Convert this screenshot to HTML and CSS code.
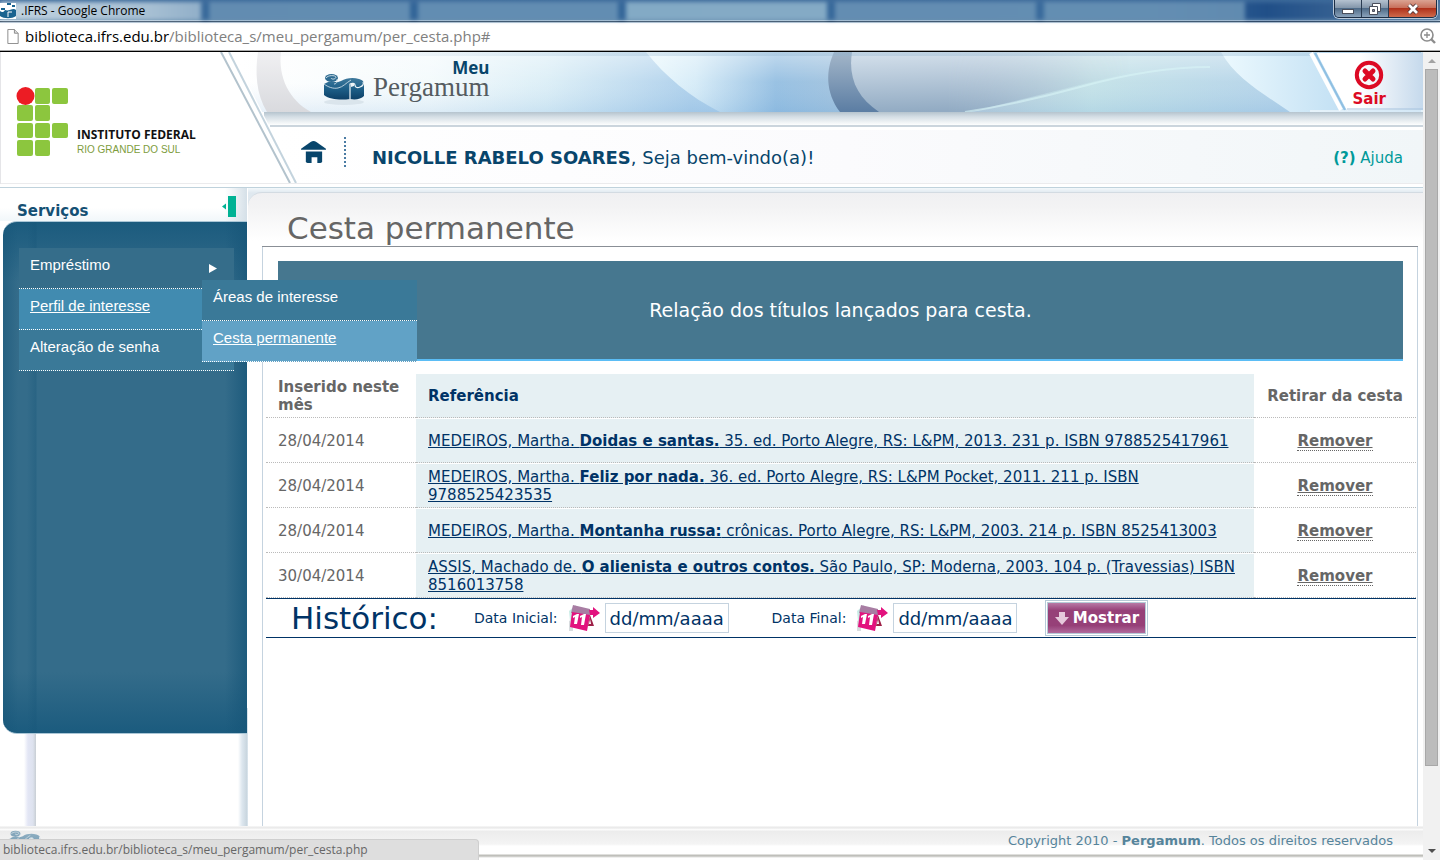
FILE: index.html
```html
<!DOCTYPE html>
<html lang="pt-BR">
<head>
<meta charset="utf-8">
<title>.IFRS</title>
<link rel="stylesheet" href="styles.css">
</head>
<body>
<svg class="defs" width="0" height="0" aria-hidden="true">
  <defs>
    <linearGradient id="scrollBlue" x1="0" y1="0" x2="0" y2="1"><stop offset="0" stop-color="#3f7a9d"/><stop offset=".5" stop-color="#1d5f88"/><stop offset="1" stop-color="#0d4067"/></linearGradient>
    <symbol id="scroll-mark" viewBox="0 0 42 34">
      <ellipse cx="21" cy="29" rx="20" ry="3" fill="#cfdbe2" opacity=".6"/>
      <path d="M1 11l4-2h10l3-1c5-3 12-4 18-2 4 1 5 3 5 6v11c-3 3-8 4-14 3-8 1-20 1-26-4z" fill="url(#scrollBlue)"/>
      <ellipse cx="8.500" cy="5" rx="6.500" ry="4" fill="#2f6c92"/>
      <path d="M3 5c2-3 9-3 10-1 0 2-4 3-5 1M14 6c1 3-1 5-3 5" fill="none" stroke="#d5e3eb" stroke-width=".9"/>
      <path d="M1 11c4 3 9 5 14 4 5-1 8-5 13-8" fill="none" stroke="#c9dae4" stroke-width=".9"/>
      <path d="M27 26V11c2-1 5-1 5 1 0 3 3 3 5 2 3-1 4-3 3-5" fill="none" stroke="#eef5f8" stroke-width="1.200"/>
      <path d="M28 11c2-1 4 0 3 2l-3 1z" fill="#eef5f8"/>
    </symbol>
    <symbol id="calendar" viewBox="0 0 32 28">
      <path d="M1 7l7-6v12l-6 4z" fill="#c9ece6"/><path d="M1 17l4-2v12H1z" fill="#d8dcdf"/>
      <path d="M5 1l17 4v8L3 9z" fill="#a87da3"/>
      <path d="M4 8l18 3-3 16-17-4z" fill="#e2127e"/>
      <path d="M21 6h4V3l7 6-7 5v-3h-3z" fill="#e2127e"/>
      <path d="M22 11l4 11h-6z" fill="#9e2148"/><path d="M22 15l1 5h-2z" fill="#fff"/>
      <path d="M5 12l4-2h2l-2 10H6l1-7-2 1zM12 12l4-2h2l-2 11h-3l1-8-2 1z" fill="#fff"/>
    </symbol>
  </defs>
</svg>
<div class="window">
  <header class="titlebar">
    <div class="titlebar-tabs" aria-hidden="true"><i></i><i></i><i></i><i class="lit"></i><i></i><i></i></div>
    <svg class="favicon" viewBox="0 0 16 16"><rect width="16" height="16" fill="#fff"/><path d="M0 8c2 2 4 1 5-1 4 2 8-3 11 0v6c-4 3-12 3-16 0z" fill="#1a6390"/><path d="M7 1h4M12 3h3M1 6h4" stroke="#1a6390" stroke-width="2"/><path d="M8 14V9h4" fill="none" stroke="#fff"/></svg>
    <span class="window-title">.IFRS - Google Chrome</span>
    <div class="window-buttons">
      <button type="button" aria-label="Minimizar"><svg viewBox="0 0 14 12"><rect x="1.500" y="6.500" width="11" height="4" fill="#fff" stroke="#4a4f5c"/></svg></button>
      <button type="button" aria-label="Restaurar"><svg viewBox="0 0 14 12"><path d="M4.500.500h8v8h-8z" fill="#fff" stroke="#4a4f5c"/><path d="M1.500 3.500h8v8h-8z" fill="#fff" stroke="#4a4f5c"/><path d="M4.500 6.500h2v2h-2z" fill="#889" stroke="#4a4f5c"/></svg></button>
      <button type="button" class="close" aria-label="Fechar"><svg viewBox="0 0 14 12"><path d="M3 2l8 8M11 2l-8 8" stroke="#4d3234" stroke-width="4.500"/><path d="M3 2l8 8M11 2l-8 8" stroke="#fff" stroke-width="2.800"/></svg></button>
    </div>
  </header>
  <div class="addressbar">
    <svg class="page-icon" viewBox="0 0 12 16"><path d="M.500.500h7l4 4v11h-11z" fill="#fff" stroke="#888"/><path d="M7.500.500v4h4" fill="#ddd" stroke="#888"/></svg>
    <span class="address"><b>biblioteca.ifrs.edu.br</b>/biblioteca_s/meu_pergamum/per_cesta.php#</span>
    <svg class="zoom-icon" viewBox="0 0 16 16" fill="none" stroke="#8c8c8c"><circle cx="7" cy="7" r="6" stroke-width="1.600"/><path d="M4 7h6M7 4v6" stroke-width="1.300"/><path d="M11 11l4 4" stroke-width="2.400"/></svg>
  </div>

  <div class="viewport">
    <div class="page">
      <div class="masthead">
        <svg class="masthead-art" viewBox="0 0 1423 136" preserveAspectRatio="none" aria-hidden="true">
          <defs>
            <linearGradient id="sky"><stop offset="0" stop-color="#fff"/><stop offset=".16" stop-color="#f3fafc"/><stop offset=".26" stop-color="#d9edf6"/><stop offset=".38" stop-color="#a9cdea"/><stop offset=".46" stop-color="#a3c9e8"/><stop offset=".62" stop-color="#b5cad9"/><stop offset=".72" stop-color="#c0e0e6"/><stop offset=".88" stop-color="#afd0e8"/><stop offset="1" stop-color="#d2ecf7"/></linearGradient>
            <linearGradient id="deep"><stop offset="0" stop-color="#e9f8fd"/><stop offset=".25" stop-color="#d3eaf7"/><stop offset=".65" stop-color="#8ebbe0"/><stop offset="1" stop-color="#9cbfdc"/></linearGradient>
            <linearGradient id="band" x1="0" y1="0" x2="0" y2="1"><stop offset="0" stop-color="#a3b6c9"/><stop offset="1" stop-color="#5b7da3"/></linearGradient>
            <linearGradient id="haze" x1="0" y1="0" x2=".15" y2="1"><stop offset="0" stop-color="#d5e1ec"/><stop offset="1" stop-color="#92abc3"/></linearGradient>
            <linearGradient id="hazeFade"><stop offset="0" stop-color="#fff"/><stop offset=".35" stop-color="#fff"/><stop offset="1" stop-color="#000"/></linearGradient>
            <mask id="hazeMask"><rect x="850" width="280" height="60" fill="url(#hazeFade)"/></mask>
            <linearGradient id="glint"><stop offset="0" stop-color="#ecf9fe"/><stop offset="1" stop-color="#a7d0ed"/></linearGradient>
            <linearGradient id="sweep" x1="0" y1="0" x2="0" y2="1"><stop offset="0" stop-color="#fff" stop-opacity=".45"/><stop offset=".5" stop-color="#fff" stop-opacity=".1"/><stop offset="1" stop-color="#7fb0dd" stop-opacity=".18"/></linearGradient>
            <linearGradient id="grey" x1="0" y1="0" x2="0" y2="1"><stop offset="0" stop-color="#f0f0f2"/><stop offset="1" stop-color="#d9dade"/></linearGradient>
            <linearGradient id="edge"><stop offset="0" stop-color="#8db2ce" stop-opacity="0"/><stop offset=".4" stop-color="#8db2ce" stop-opacity=".3"/></linearGradient>
            <linearGradient id="shade" x1="0" y1="0" x2="0" y2="1"><stop offset="0" stop-color="#b5c4ce"/><stop offset=".35" stop-color="#d3dde4"/><stop offset="1" stop-color="#fdfefe"/></linearGradient>
            <linearGradient id="sub"><stop offset="0" stop-color="#fff"/><stop offset=".5" stop-color="#fbfbfd"/><stop offset="1" stop-color="#f1f6f8"/></linearGradient>
            <linearGradient id="corner"><stop offset=".4" stop-color="#fff"/><stop offset="1" stop-color="#c5d9ec"/></linearGradient>
          </defs>
          <rect width="1423" height="136" fill="#fff"/>
          <rect x="240" width="1183" height="60" fill="url(#sky)"/>
          <rect x="240" width="1183" height="60" fill="url(#sweep)"/>
          <path d="M258 0h23c-3 25 8 48 30 60h-44c-11-18-12-40-9-60z" fill="url(#grey)"/>
          <path d="M646 0h200v60H720C690 45 665 24 646 0z" fill="url(#deep)"/>
          <path d="M646 0h200v60H720C690 45 665 24 646 0z" fill="url(#sweep)"/>
          <path d="M834 0h20c-4 25 6 44 27 60h-41c-15-20-14-42-6-60z" fill="url(#band)"/>
          <path d="M852 0h280v20L970 60h-91c-22-15-31-34-27-60z" fill="url(#haze)" mask="url(#hazeMask)"/>
          <path d="M965 60c45-7 75-14 115-25 50-14 90-20 130-20" fill="none" stroke="#d8f5f6" stroke-width="2" opacity=".6"/>
          <path d="M1221 0h200v60h-131c-26-18-54-33-69-60z" fill="url(#glint)"/>
          <rect x="240" width="1183" height="4" fill="url(#edge)"/>
          <rect x="264" y="60" width="1159" height="13" fill="url(#shade)"/>
          <rect x="270" y="73" width="1153" height="2" fill="#cbd5dd"/>
          <rect x="272" y="78" width="1151" height="53" fill="url(#sub)"/>
          <path d="M0 0h232l66 131H0z" fill="#fff"/>
          <path d="M221 0l69 131" fill="none" stroke="#b3c3cd" stroke-width="2"/>
          <path d="M229 0l67 131" fill="none" stroke="#c3d3dd" stroke-width="2"/>
          <path d="M0 131.500h1423" stroke="#ebebed"/>
          <path d="M.500 0v132" stroke="#e5e5e8"/>
          <rect y="135" width="1423" height="1" fill="#bfd2dc"/>
          <path d="M1317 1h106v57h-76z" fill="url(#corner)"/>
          <path d="M1311 1l30 57" stroke="#fff" stroke-width="4"/><path d="M1315 1l30 57" stroke="#8fbfe2" stroke-width="2"/><path d="M1318 1l30 57" stroke="#fff" stroke-width="2"/>
          <path d="M1310 59h113" stroke="#fff" stroke-width="1"/><path d="M1347 57h76" stroke="#a6c3de"/>
        </svg>
        <div class="school">
          <svg class="school-mark" viewBox="0 0 54 70" aria-hidden="true"><g fill="#8cc63e"><rect x="19" y="1" width="15" height="16" rx="2"/><rect x="36" y="1" width="16" height="16" rx="2"/><rect x="1" y="18" width="16" height="16" rx="2"/><rect x="19" y="18" width="15" height="16" rx="2"/><rect x="1" y="36" width="16" height="15" rx="2"/><rect x="19" y="36" width="15" height="15" rx="2"/><rect x="36" y="36" width="16" height="15" rx="2"/><rect x="1" y="53" width="16" height="16" rx="2"/><rect x="19" y="53" width="15" height="16" rx="2"/></g><circle cx="9.500" cy="9" r="9" fill="#ec1c24"/></svg>
          <div class="school-name"><strong>INSTITUTO FEDERAL</strong><span>RIO GRANDE DO SUL</span></div>
        </div>
        <div class="brandbar">
          <div class="brand"><svg class="brand-mark"><use href="#scroll-mark"/></svg><div class="brand-name"><strong>Meu</strong><span>Pergamum</span></div></div>
          <a class="logout" href="#"><svg viewBox="0 0 30 30" fill="none" stroke="#dc0a24"><circle cx="15" cy="15" r="12.200" stroke-width="4"/><path d="M11 11l8 8M19 11l-8 8" stroke-width="5" stroke-linecap="round"/></svg>Sair</a>
        </div>
        <div class="welcomebar">
          <a class="home" href="#" aria-label="Início"><svg viewBox="0 0 26 24" fill="#08456b"><path d="M10 1q3-2 6 0l10 7v1H0V8z"/><path d="M5 11h17v11q-1 1-2 1h-3v-6h-6v6H7q-1 0-2-1z"/></svg></a>
          <p class="welcome"><strong>NICOLLE RABELO SOARES</strong>, Seja bem-vindo(a)!</p>
          <a class="help" href="#"><b>(?)</b> Ajuda</a>
        </div>
      </div>

      <div class="columns">
        <nav class="sidebar" aria-label="Serviços">
          <div class="sidebar-head"><h2>Serviços</h2><button type="button" class="collapse" aria-label="Recolher"><svg viewBox="0 0 14 21" fill="#00b294"><path d="M0 10.500l4-3v6z"/><rect x="6" width="8" height="21"/></svg></button></div>
          <div class="sidebar-panel">
            <ul class="menu">
              <li><a href="#">Empréstimo<svg class="arrow" viewBox="0 0 8 9"><path d="M0 0l8 4.500L0 9z" fill="#fff"/></svg></a></li>
              <li class="open"><a href="#">Perfil de interesse</a>
                <ul class="submenu"><li><a href="#">Áreas de interesse</a></li><li class="open"><a href="#">Cesta permanente</a></li></ul>
              </li>
              <li><a href="#">Alteração de senha</a></li>
            </ul>
          </div>
        </nav>
        <main class="content">
          <h1>Cesta permanente</h1>
          <div class="sheet">
            <p class="notice">Relação dos títulos lançados para cesta.</p>
            <table class="basket">
              <colgroup><col class="col-date"><col><col class="col-remove"></colgroup>
              <thead><tr><th>Inserido neste mês</th><th class="ref">Referência</th><th class="remove">Retirar da cesta</th></tr></thead>
              <tbody>
                <tr><td>28/04/2014</td><td class="ref"><a href="#">MEDEIROS, Martha. <b>Doidas e santas.</b> 35. ed. Porto Alegre, RS: L&amp;PM, 2013. 231 p. ISBN 9788525417961</a></td><td class="remove"><a href="#">Remover</a></td></tr>
                <tr><td>28/04/2014</td><td class="ref"><a href="#">MEDEIROS, Martha. <b>Feliz por nada.</b> 36. ed. Porto Alegre, RS: L&amp;PM Pocket, 2011. 211 p. ISBN 9788525423535</a></td><td class="remove"><a href="#">Remover</a></td></tr>
                <tr><td>28/04/2014</td><td class="ref"><a href="#">MEDEIROS, Martha. <b>Montanha russa:</b> crônicas. Porto Alegre, RS: L&amp;PM, 2003. 214 p. ISBN 8525413003</a></td><td class="remove"><a href="#">Remover</a></td></tr>
                <tr><td>30/04/2014</td><td class="ref"><a href="#">ASSIS, Machado de. <b>O alienista e outros contos.</b> São Paulo, SP: Moderna, 2003. 104 p. (Travessias) ISBN 8516013758</a></td><td class="remove"><a href="#">Remover</a></td></tr>
              </tbody>
            </table>
            <form class="history">
              <h2>Histórico:</h2>
              <div class="field"><label for="start">Data Inicial:</label><svg class="calendar"><use href="#calendar"/></svg><input id="start" type="text" value="dd/mm/aaaa"></div>
              <div class="field"><label for="end">Data Final:</label><svg class="calendar"><use href="#calendar"/></svg><input id="end" type="text" value="dd/mm/aaaa"></div>
              <button type="button" class="show"><svg viewBox="0 0 14 13"><path d="M4 0h6v5h4l-7 8-7-8h4z" fill="#e6c9dc"/></svg>Mostrar</button>
            </form>
          </div>
        </main>
      </div>

      <footer class="footer"><svg class="footer-mark"><use href="#scroll-mark"/></svg><p>Copyright 2010 - <strong>Pergamum</strong>. Todos os direitos reservados</p></footer>
    </div>
    <div class="scrollbar" aria-hidden="true">
      <svg viewBox="0 0 8 4"><path d="M0 4l4-4 4 4z" fill="#a3a3a3"/></svg>
      <div class="track"><div class="thumb"></div></div>
      <svg viewBox="0 0 8 4"><path d="M0 0l4 4 4-4z" fill="#505050"/></svg>
    </div>
  </div>
  <div class="status">biblioteca.ifrs.edu.br/biblioteca_s/meu_pergamum/per_cesta.php</div>
</div>
</body>
</html>
```
FILE: styles.css
```css
* { box-sizing: border-box; }
body, h1, h2, p, ul { margin: 0; padding: 0; }
ul { list-style: none; }
svg { display: block; flex: none; }
button { padding: 0; border: 0; background: none; cursor: pointer; }
body { font: 15px/18px "DejaVu Sans", Verdana, sans-serif; color: #666; background: #fff; }
.defs { position: absolute; }

.window { position: relative; display: flex; flex-direction: column; height: 100vh; overflow: hidden; }

/* window frame */
.titlebar { position: relative; display: flex; align-items: center; gap: 5px; height: 23px; padding-bottom: 2px; font: 12px/18px "Open Sans", sans-serif; color: #000; background: linear-gradient(#3d6b9b, #5279a2 40%, #6b91b0 88%, #d4e2ee 89%, #25394f 93%, #bac8d6 97%); }
.titlebar-tabs { position: absolute; inset: 2px 0 3px 0; display: flex; gap: 8px; padding-right: 195px; filter: blur(2px); background: linear-gradient(90deg, #b7cbdb, #9db8cd 150px, #2f6296 210px, #3a6b9c 80%, #204f88 88%, #54799f); }
.titlebar-tabs i { flex: 1; background: #6b94b6; opacity: .85; }
.titlebar-tabs i:first-child { background: linear-gradient(90deg, #c3d4e1, #9fbad0); }
.titlebar-tabs .lit { background: #92b6cd; }
.favicon { position: relative; width: 16px; height: 18px; }
.window-title { position: relative; flex: 1; }
.window-buttons { position: relative; align-self: flex-start; display: flex; height: 18px; margin-right: 3px; border: 1px solid #1c2e45; border-top: 0; border-radius: 0 0 5px 5px; overflow: hidden; box-shadow: 0 0 0 1px #b9c9da; }
.window-buttons button { display: grid; place-items: center; width: 27px; border-right: 1px solid #2a3c52; background: linear-gradient(#b5c2d0, #8497ab 45%, #4f6b88 50%, #8ba3bb); }
.window-buttons svg { width: 14px; height: 12px; }
.window-buttons .close { width: 47px; border: 0; background: linear-gradient(#dba493, #c8715c 45%, #b0321b 50%, #cf6a4b); }
.addressbar { display: flex; align-items: center; gap: 6px; height: 29px; padding: 0 4px 2px 7px; border-bottom: 1px solid #000; background: #fff; box-shadow: inset 0 -1px #aaa; font: 15px/20px "Open Sans", sans-serif; color: #808080; }
.address { flex: 1; }
.address b { font-weight: 400; color: #000; }
.page-icon { width: 12px; height: 15px; }
.zoom-icon { width: 16px; height: 16px; }
.viewport { flex: 1; display: flex; min-height: 0; }
.page { flex: 1; display: flex; flex-direction: column; min-width: 0; }
.scrollbar { display: flex; flex-direction: column; align-items: center; width: 17px; padding: 7px 0; background: #f1f1f1; }
.scrollbar svg { width: 8px; height: 4px; }
.track { flex: 1; width: 13px; margin: 6px 0; }
.thumb { height: 90%; border: 1px solid #a8a8a8; background: #bcbcbc; }
.status { position: absolute; left: 0; bottom: 0; width: 479px; height: 21px; padding: 0 3px; border: 1px solid #cfcfcf; border-left: 0; border-bottom: 0; border-radius: 0 4px 0 0; background: #dedede; font: 12px/20px "Open Sans", sans-serif; color: #666; }

/* masthead */
.masthead { position: relative; display: grid; grid-template: 60px 76px / 300px 1fr; }
.masthead-art { position: absolute; inset: 0; width: 100%; height: 100%; }
.school, .brandbar, .welcomebar { position: relative; display: flex; }
.school { grid-row: span 2; align-items: flex-start; gap: 7px; padding: 35px 0 0 16px; }
.school-mark { width: 54px; height: 70px; }
.school-name { display: flex; flex-direction: column; padding-top: 41px; font: 12px/14px "Open Sans", sans-serif; color: #7d9c3c; white-space: nowrap; }
.school-name strong { color: #111; font-weight: 700; }
.school-name span { font: 10px/15px "Liberation Sans", Arial, sans-serif; }
.brandbar { justify-content: space-between; align-items: flex-start; padding: 0 37px 0 23px; }
.brand { display: flex; gap: 8px; }
.brand-mark { width: 42px; height: 34px; margin-top: 21px; }
.brand-name { display: flex; flex-direction: column; padding-top: 8px; font: 27px/22px "Liberation Serif", serif; color: #555c61; }
.brand-name strong { align-self: flex-end; font: 700 17px/16px "Open Sans", sans-serif; color: #08456b; }
.logout { display: flex; flex-direction: column; align-items: center; padding-top: 8px; font-weight: 700; font-size: 15px; color: #dc0a24; text-decoration: none; }
.logout svg { width: 30px; height: 30px; }
.welcomebar { align-items: flex-start; padding: 25px 20px 0 0; line-height: 42px; }
.home { padding: 4px 20px 4px 1px; background: repeating-linear-gradient(#4a7ba3 0 2px, transparent 2px 4px) right / 2px 100% no-repeat; }
.home svg { width: 25px; height: 23px; }
.welcome { flex: 1; padding-left: 26px; font-size: 18px; color: #08456b; }
.help { font-size: 15px; color: #009999; text-decoration: none; }

/* sidebar */
.columns { flex: 1; display: flex; min-height: 0; background: linear-gradient(#f3f8fb, #dfe8ef 5px, #e3ebf1 30px, #fff 60px); }
.sidebar { display: flex; flex-direction: column; width: 248px; flex: none; padding-right: 1px; background: linear-gradient(90deg, transparent 24px, #e3e6f5 28px, #dde2ee 33px, #c8ced4 36px, transparent 36px, transparent 238px, #dde7ef 242px, #c8d5de 247px, #e7f0f7 248px) 0 520px / 100% 100% no-repeat, #fff; }
.sidebar-head { display: flex; justify-content: space-between; align-items: flex-start; height: 33px; padding: 8px 11px 0 17px; background: linear-gradient(90deg, transparent 225px, #d5e0e8), linear-gradient(#fff 60%, #f1f7fa); }
.sidebar-head h2 { font-size: 15px; line-height: 30px; color: #155074; }
.sidebar-head svg { width: 14px; height: 21px; }
.sidebar-panel { height: 513px; margin-left: 3px; padding: 26px 13px 0 16px; border: solid #aac6d6; border-width: 1px 0; border-radius: 14px 0 0 14px; background: linear-gradient(90deg, rgba(22,85,120,.5), transparent 15px, transparent 24px, rgba(22,85,120,.35) 33px, transparent 34px, transparent 222px, rgba(22,85,120,.75)), linear-gradient(#1b5b7e, #346c8a 60px, #346c8a 450px, #1b5b7e); }
.menu { position: relative; font: 15px/18px "Liberation Sans", Arial, sans-serif; }
.menu li { position: relative; border-bottom: 1px dotted #fff; background: #3a7998; }
.menu > li:first-child { background: #356d8a; }
.menu > .open { background: #418bb0; }
.menu a { display: flex; justify-content: space-between; height: 40px; padding: 8px 17px 0 11px; color: #fff; text-decoration: none; }
.menu .open > a { text-decoration: underline; }
.arrow { width: 8px; height: 9px; margin-top: 8px; }
.submenu { position: absolute; z-index: 2; top: -9px; left: 183px; width: 215px; }
.submenu .open { background: #61a2c6; }

/* content */
.content { flex: 1; display: flex; flex-direction: column; min-width: 0; margin-top: 4px; padding: 0 5px 0 14px; border-top: 1px solid #d3dbe2; border-top-left-radius: 14px; background: linear-gradient(#f0f0f2, #f3f3f4 14px, #fff 48px); }
h1 { height: 54px; padding: 15px 0 0 25px; border-bottom: 1px solid #8a8f96; font-size: 31px; line-height: 40px; font-weight: 400; color: #666; }
.sheet { flex: 1; padding: 14px 0 0; border: solid #c5d3df; border-width: 0 1px; }
.notice { display: grid; place-items: center; height: 100px; margin: 0 14px 13px 15px; border-bottom: 2px solid #5bbdf5; background: #46778f; font-size: 19px; line-height: 24px; color: #fff; }
.basket { width: calc(100% - 4px); margin-left: 3px; border-collapse: separate; border-spacing: 0; table-layout: fixed; }
.col-date { width: 150px; }
.col-remove { width: 162px; }
.basket th, .basket td { height: 45px; padding: 3px 12px; border-top: 1px solid #fff; border-bottom: 1px dotted #bbb; text-align: left; }
.basket th { height: 44px; border-top: 0; }
.basket .ref { background: #e6f0f3; color: #003366; }
.ref a { color: #003366; }
.basket .remove { padding: 3px 0; text-align: center; }
.remove a { border-bottom: 1px dotted #666; font-weight: 700; color: #666; }
.history { display: flex; align-items: center; width: calc(100% - 4px); height: 40px; margin-left: 3px; padding-left: 25px; border: solid #003366; border-width: 1px 0; color: #003366; }
.history h2 { width: 183px; font-size: 31px; line-height: 38px; font-weight: 400; }
.field { display: flex; align-items: center; font-size: 14px; }
.field + .field { margin-left: 43px; }
.calendar { width: 32px; height: 28px; margin: 0 5px 0 10px; }
.field input { width: 124px; height: 30px; padding: 0 4px; border: 1px solid #c5d3df; font: 18px/24px "DejaVu Sans", Verdana, sans-serif; color: #003366; background: #fff; }
.show { display: flex; align-items: center; justify-content: center; gap: 4px; width: 103px; height: 36px; margin-left: 28px; border: 3px double #b6cbd8; background: linear-gradient(#b87aa6, #964078 25%, #964078 75%, #b06a9c) padding-box, #fff; font: 700 15px/18px "DejaVu Sans", Verdana, sans-serif; color: #fff; }
.show svg { width: 14px; height: 13px; }

/* footer */
.footer { display: flex; justify-content: space-between; height: 34px; padding: 4px 30px 0 9px; background: linear-gradient(#f8f8f8, #e6e6e6 2px, #fbfbfb 3px, #fbfbfb 4px, #ececec 5px, #f4f4f4 18px, #fff 20px, #fff 28px, #bfbfba 29px, #bfbfba 30px, #fff 32px); font-size: 13px; line-height: 22px; color: #56849b; }
.footer-mark { width: 32px; height: 26px; opacity: .55; }
```
